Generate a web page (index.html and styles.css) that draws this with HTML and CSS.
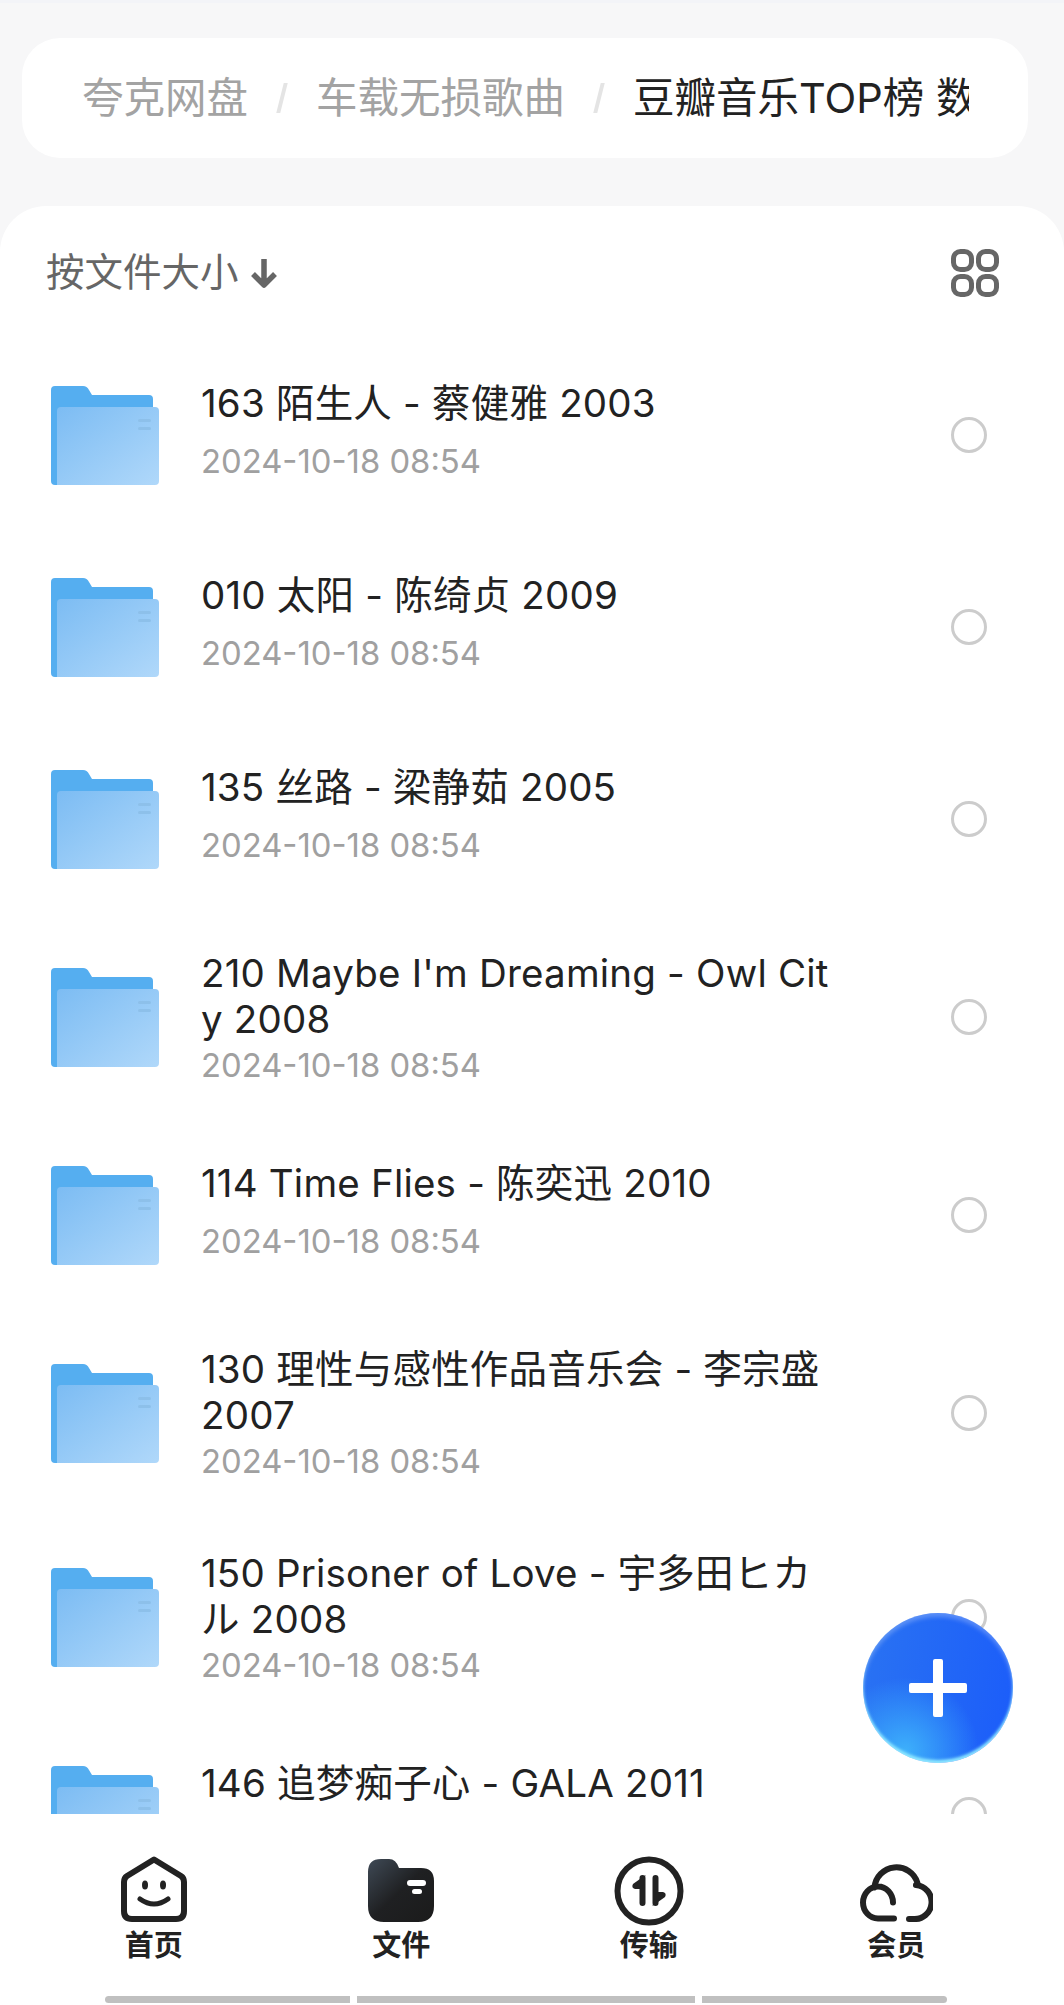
FILE: index.html
```html
<!DOCTYPE html>
<html lang="zh-CN">
<head>
<meta charset="utf-8">
<title>文件</title>
<link rel="stylesheet" href="styles.css">
</head>
<body>
<svg class="defs" width="0" height="0" aria-hidden="true">
  <defs>
    <linearGradient id="folderFront" x1="0" y1="0" x2="1" y2="1">
      <stop offset="0" stop-color="#7cbcf3"/>
      <stop offset="1" stop-color="#b0d8fa"/>
    </linearGradient>
    <linearGradient id="filesFill" x1="0" y1="0" x2="1" y2="1">
      <stop offset="0" stop-color="#3f4a56"/>
      <stop offset=".5" stop-color="#1f2022"/>
      <stop offset="1" stop-color="#1b1b1b"/>
    </linearGradient>
    <symbol id="folder" viewBox="0 0 108 99">
      <path d="M4 0H32Q36 0 38 4L41 9H98Q102 9 102 13V99H4Q0 99 0 95V4Q0 0 4 0Z" fill="#55aef0"/>
      <path d="M10 21H104Q108 21 108 25V95Q108 99 104 99H6V25Q6 21 10 21Z" fill="url(#folderFront)"/>
      <rect x="87" y="33" width="13" height="3" rx="1.5" fill="#8dc0ea"/>
      <rect x="87" y="41" width="13" height="3" rx="1.5" fill="#8dc0ea"/>
    </symbol>
  </defs>
</svg>

<header class="crumbs">
  <div class="crumbs-track">
    <span class="crumb">夸克网盘</span>
    <span class="sep"></span>
    <span class="crumb">车载无损歌曲</span>
    <span class="sep"></span>
    <span class="crumb crumb-current">豆瓣音乐TOP榜 数</span>
  </div>
</header>

<main class="panel">
  <div class="toolbar">
    <div class="sort">按文件大小
      <svg class="sort-arrow" viewBox="0 0 28 30"><path d="M14 1V27M3 16L14 27L25 16" fill="none" stroke="#666" stroke-width="5.5" stroke-linejoin="round"/></svg>
    </div>
    <svg class="grid-toggle" viewBox="0 0 48 48">
      <g fill="none" stroke="#666" stroke-width="5">
        <rect x="2.5" y="2.5" width="18" height="18" rx="7"/>
        <rect x="27.5" y="2.5" width="18" height="18" rx="7"/>
        <rect x="2.5" y="27.5" width="18" height="18" rx="7"/>
        <rect x="27.5" y="27.5" width="18" height="18" rx="7"/>
      </g>
    </svg>
  </div>

  <ul class="list">
    <li class="row">
      <svg class="folder"><use href="#folder"/></svg>
      <div class="info"><p class="name">163 陌生人 - 蔡健雅 2003</p><p class="date">2024-10-18 08:54</p></div>
      <span class="radio"></span>
    </li>
    <li class="row">
      <svg class="folder"><use href="#folder"/></svg>
      <div class="info"><p class="name">010 太阳 - 陈绮贞 2009</p><p class="date">2024-10-18 08:54</p></div>
      <span class="radio"></span>
    </li>
    <li class="row">
      <svg class="folder"><use href="#folder"/></svg>
      <div class="info"><p class="name">135 丝路 - 梁静茹 2005</p><p class="date">2024-10-18 08:54</p></div>
      <span class="radio"></span>
    </li>
    <li class="row row-tall">
      <svg class="folder"><use href="#folder"/></svg>
      <div class="info"><p class="name">210 Maybe I'm Dreaming - Owl Cit<br>y 2008</p><p class="date">2024-10-18 08:54</p></div>
      <span class="radio"></span>
    </li>
    <li class="row">
      <svg class="folder"><use href="#folder"/></svg>
      <div class="info"><p class="name">114 Time Flies - 陈奕迅 2010</p><p class="date">2024-10-18 08:54</p></div>
      <span class="radio"></span>
    </li>
    <li class="row row-tall">
      <svg class="folder"><use href="#folder"/></svg>
      <div class="info"><p class="name">130 理性与感性作品音乐会 - 李宗盛<br>2007</p><p class="date">2024-10-18 08:54</p></div>
      <span class="radio"></span>
    </li>
    <li class="row row-tall">
      <svg class="folder"><use href="#folder"/></svg>
      <div class="info"><p class="name">150 Prisoner of Love - 宇多田ヒカ<br>ル 2008</p><p class="date">2024-10-18 08:54</p></div>
      <span class="radio"></span>
    </li>
    <li class="row">
      <svg class="folder"><use href="#folder"/></svg>
      <div class="info"><p class="name">146 追梦痴子心 - GALA 2011</p><p class="date">2024-10-18 08:54</p></div>
      <span class="radio"></span>
    </li>
  </ul>
</main>

<button class="fab" type="button" aria-label="新建">
  <svg viewBox="0 0 58 58" width="58" height="58"><path d="M24 2Q24 0 26 0H32Q34 0 34 2V24H56Q58 24 58 26V32Q58 34 56 34H34V56Q34 58 32 58H26Q24 58 24 56V34H2Q0 34 0 32V26Q0 24 2 24H24Z" fill="#fff"/></svg>
</button>

<nav class="tabs">
  <a class="tab">
    <span class="tab-icon">
      <svg width="66" height="66" viewBox="0 0 66 66">
        <path d="M33 3.5L60 20Q63 22 63 26V55Q63 63 55 63H11Q3 63 3 55V26Q3 22 6 20Z" fill="none" stroke="#222" stroke-width="6" stroke-linejoin="round"/>
        <ellipse cx="24" cy="29" rx="3" ry="4.5" fill="#222"/>
        <ellipse cx="42" cy="29" rx="3" ry="4.5" fill="#222"/>
        <path d="M19 43Q33 53 47 43" fill="none" stroke="#222" stroke-width="5" stroke-linecap="round"/>
      </svg>
    </span>
    首页
  </a>
  <a class="tab">
    <span class="tab-icon">
      <svg width="66" height="63" viewBox="0 0 66 63">
        <path d="M0 13Q0 0 13 0H21Q28 0 31 9H53Q66 9 66 22V47Q66 63 50 63H16Q0 63 0 47Z" fill="url(#filesFill)"/>
        <rect x="39" y="21" width="19" height="6" rx="3" fill="#fff"/>
        <rect x="44" y="30" width="10" height="5" rx="2.5" fill="#fff"/>
      </svg>
    </span>
    文件
  </a>
  <a class="tab">
    <span class="tab-icon tab-icon-low">
      <svg width="70" height="70" viewBox="0 0 70 70">
        <circle cx="35" cy="35" r="31.5" fill="none" stroke="#222" stroke-width="6"/>
        <path d="M28.5 22V47M41.5 22V47" fill="none" stroke="#222" stroke-width="6" stroke-linecap="round"/>
        <path d="M31.5 19L19 28Q17 32 21 33H28Z" fill="#222"/>
        <path d="M38.5 50L51 41Q53 37 49 36H42Z" fill="#222"/>
      </svg>
    </span>
    传输
  </a>
  <a class="tab">
    <span class="tab-icon">
      <svg width="73" height="59" viewBox="0 0 73 59">
        <path d="M33 39.5A15 16 0 1 0 18 55.5H34M14.5 24.5A22 22 0 0 1 57.5 20M56 22A17 17 0 0 1 53 56H49" fill="none" stroke="#222" stroke-width="6" stroke-linecap="round"/>
      </svg>
    </span>
    会员
  </a>
</nav>

<div class="gesture">
  <span class="gesture-bar"></span>
  <span class="gesture-bar"></span>
  <span class="gesture-bar"></span>
</div>
</body>
</html>
```
FILE: styles.css
```css
* { box-sizing: border-box; }

html, body {
  margin: 0;
  height: 2005px;
  overflow: hidden;
}

body {
  position: relative;
  display: flex;
  flex-direction: column;
  background: #f7f7f8;
  border-top: 3px solid #f3f4f8;
  color: #222;
  font-family: Inter, "Noto Sans CJK SC", sans-serif;
}

p, ul { margin: 0; padding: 0; }
ul { list-style: none; }

.defs { position: absolute; }

/* breadcrumb card */
.crumbs {
  flex: none;
  height: 120px;
  margin: 35px 36px 48px 22px;
  padding: 0 59px 0 60px;
  display: flex;
  align-items: center;
  background: #fff;
  border-radius: 38px;
}

.crumbs-track {
  display: flex;
  align-items: center;
  width: 100%;
  overflow: hidden;
  white-space: nowrap;
  font-size: 41.5px;
  line-height: 60px;
}

.crumb { flex: none; color: #a3a3a3; }
.crumb-current { color: #222; }

.sep {
  flex: none;
  width: 4px;
  height: 30px;
  margin: 0 32px;
  background: #e4e4e4;
  transform: skewX(-14deg);
}

/* file panel */
.panel {
  flex: 1;
  display: flex;
  flex-direction: column;
  min-height: 0;
  background: #fff;
  border-radius: 46px 46px 0 0;
}

.toolbar {
  flex: none;
  height: 133px;
  padding: 0 65px 0 46px;
  display: flex;
  align-items: center;
  justify-content: space-between;
}

.sort {
  display: flex;
  align-items: center;
  gap: 11px;
  padding-bottom: 2px;
  font-size: 38.5px;
  line-height: 50px;
  color: #666;
}

.sort-arrow { width: 28px; height: 30px; margin-top: 2px; }
.grid-toggle { width: 48px; height: 48px; }

.list {
  flex: none;
  height: 1475px;
  overflow: hidden;
}

.row {
  height: 192px;
  padding: 0 77px 0 51px;
  display: flex;
  align-items: center;
}

.row-tall { height: 204px; }

.folder {
  flex: none;
  width: 108px;
  height: 99px;
  margin-right: 42px;
}

.info {
  flex: none;
  width: 640px;
  padding-bottom: 6px;
}

.row-tall .info { padding: 4px 0 0; }

.name {
  min-height: 58px;
  font-size: 38.5px;
  line-height: 46px;
  letter-spacing: .2px;
  white-space: nowrap;
}

.date {
  font-size: 32.8px;
  line-height: 46px;
  color: #a0a0a0;
}

.radio {
  flex: none;
  width: 36px;
  height: 36px;
  margin-left: auto;
  border: 3px solid #ccc;
  border-radius: 50%;
}

/* floating add button */
.fab {
  position: absolute;
  left: 863px;
  top: 1610px;
  width: 150px;
  height: 150px;
  padding: 0;
  display: flex;
  align-items: center;
  justify-content: center;
  border: 0;
  border-radius: 50%;
  background:
    radial-gradient(circle at 28% 92%, #3db0fb 0, rgba(61, 176, 251, 0) 42%),
    linear-gradient(100deg, #2a73f2 0, #1b5cfa 100%);
  box-shadow:
    inset 0 -3px 3px #8ee8ff,
    inset 0 4px 4px rgba(255, 255, 255, .25);
}

/* bottom navigation */
.tabs {
  flex: none;
  height: 191px;
  padding: 42px 44px 0 30px;
  display: grid;
  grid-template-columns: repeat(4, 1fr);
  background: #fff;
  position: relative;
}

.tab {
  display: flex;
  flex-direction: column;
  align-items: center;
  font-size: 29px;
  font-weight: 700;
  line-height: 40px;
  color: #222;
}

.tab-icon {
  height: 70px;
  padding-bottom: 4px;
  display: flex;
  align-items: flex-end;
}

.tab-icon-low { padding-bottom: 0; }

/* system gesture strip */
.gesture {
  position: absolute;
  left: 105px;
  top: 1993px;
  display: flex;
  gap: 7px;
}

.gesture-bar {
  width: 245px;
  height: 7px;
  background: #c0c0c0;
}
.gesture-bar:first-child { border-radius: 4px 0 0 4px; }
.gesture-bar:nth-child(2) { width: 338px; }
.gesture-bar:last-child { border-radius: 0 4px 4px 0; }
```
